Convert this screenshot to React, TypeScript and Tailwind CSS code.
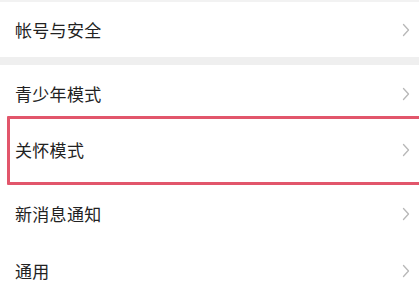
import React from "react";

const Chevron = () => (
  <svg width="8" height="14" viewBox="0 0 8 14" className="shrink-0">
    <path d="M1.5 1.5 L6.5 7 L1.5 12.5" fill="none" stroke="#b8b8b8" strokeWidth="1.3" strokeLinecap="round" strokeLinejoin="round" />
  </svg>
);

const Row = ({ label, h }: { label: string; h: string }) => (
  <div className={`flex items-center justify-between pl-[15px] pr-[9px] bg-white ${h}`}>
    <span className="text-[17px] text-[#222222] tracking-[0.3px]">{label}</span>
    <Chevron />
  </div>
);

export default function App() {
  return (
    <div
      className="relative w-[419px] h-[286px] overflow-hidden bg-white"
      style={{ fontFamily: '"Noto Sans CJK SC", "Noto Sans", sans-serif' }}
    >
      <div className="h-[2px] bg-[#f2f2f2]" />
      <Row label="帐号与安全" h="h-[55px]" />
      <div className="h-[8px] bg-[#efefef]" />
      <Row label="青少年模式" h="h-[58px]" />
      <Row label="关怀模式" h="h-[54px]" />
      <Row label="新消息通知" h="h-[74px]" />
      <Row label="通用" h="h-[40px]" />
      <div className="absolute left-[7px] top-[116px] right-[-10px] h-[69px] border-[3px] border-[#e2566b] rounded-[1px]" />
    </div>
  );
}
